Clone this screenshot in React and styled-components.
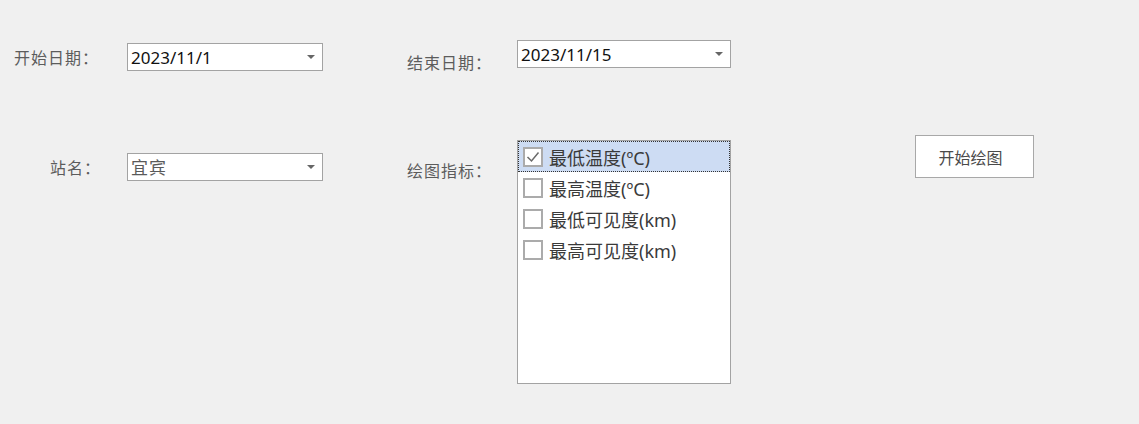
import React, { useState } from 'react';
import styled, { createGlobalStyle } from 'styled-components';

const GlobalStyle = createGlobalStyle`
    html, body {
        margin: 0;
        padding: 0;
        background: #f0f0f0;
    }
    body {
        font-family: "Noto Sans", "Noto Sans CJK SC", sans-serif;
    }
`;

const Page = styled.div`
    width: 1139px;
    height: 424px;
    background: #f0f0f0;
    display: flex;
    flex-direction: column;
`;

const Row = styled.div`
    display: flex;
    align-items: flex-start;
    margin-top: ${(p) => p.$top}px;
`;

const Field = styled.div`
    display: flex;
    align-items: flex-start;
    margin-left: ${(p) => p.$left || 0}px;
`;

const Label = styled.div`
    box-sizing: border-box;
    width: ${(p) => p.$width}px;
    padding-left: ${(p) => p.$indent || 0}px;
    margin-top: ${(p) => p.$top || 0}px;
    font-family: "Noto Sans CJK SC", sans-serif;
    font-size: 16px;
    letter-spacing: 1px;
    line-height: 20px;
    color: #5c5c5c;
    white-space: nowrap;
`;

const Combo = styled.div`
    box-sizing: border-box;
    width: ${(p) => p.$width}px;
    height: 28px;
    margin-top: ${(p) => p.$top || 0}px;
    background: #fff;
    border: 1px solid #a3a3a3;
    display: flex;
    align-items: center;
    justify-content: space-between;
    padding: 0 7px 0 3px;
`;

const ComboText = styled.span`
    font-family: "Noto Sans", "Noto Sans CJK SC", sans-serif;
    font-size: 17px;
    line-height: 1;
    color: ${(p) => (p.$muted ? '#5a5a5a' : '#111')};
    letter-spacing: ${(p) => (p.$muted ? '1px' : '0')};
`;

const Arrow = styled.span`
    width: 0;
    height: 0;
    border-left: 4px solid transparent;
    border-right: 4px solid transparent;
    border-top: 4px solid #666;
`;

const ListBox = styled.div`
    box-sizing: border-box;
    width: 214px;
    height: 244px;
    margin-top: 5px;
    background: #fff;
    border: 1px solid #a3a3a3;
    display: flex;
    flex-direction: column;
`;

const Item = styled.div`
    box-sizing: border-box;
    height: 31px;
    display: flex;
    align-items: center;
    gap: 6px;
    padding-left: 4px;
    background: ${(p) => (p.$selected ? '#cddcf3' : 'transparent')};
    border: 1px dotted ${(p) => (p.$selected ? '#333' : 'transparent')};
    font-family: "Noto Sans", "Noto Sans CJK SC", sans-serif;
    font-size: 18px;
    color: #3a3a3a;
    cursor: default;
`;

const Box = styled.span`
    box-sizing: border-box;
    width: 20px;
    height: 20px;
    border: 2px solid #ababab;
    background: #fff;
    display: flex;
    align-items: center;
    justify-content: center;
    flex-shrink: 0;
`;

const DrawButton = styled.button`
    box-sizing: border-box;
    width: 119px;
    height: 43px;
    margin-left: 184px;
    background: #fff;
    border: 1px solid #a8a8a8;
    font-family: "Noto Sans CJK SC", sans-serif;
    font-size: 16px;
    color: #4a4a4a;
    padding: 0 8px 0 0;
`;

const items = ['最低温度(ºC)', '最高温度(ºC)', '最低可见度(km)', '最高可见度(km)'];

function Check() {
    return (
        <svg width="14" height="12" viewBox="0 0 14 12">
            <polyline points="1.5,6 5.5,10 12.5,1.5" fill="none" stroke="#6a6a6a" strokeWidth="1.5" />
        </svg>
    );
}

export default function App() {
    const [checked, setChecked] = useState([true, false, false, false]);
    const [selected, setSelected] = useState(0);

    const toggle = (i) => {
        setSelected(i);
        setChecked((prev) => prev.map((c, j) => (j === i ? !c : c)));
    };

    return (
        <Page>
            <GlobalStyle />
            <Row $top={40}>
                <Field>
                    <Label $width={127} $indent={14} $top={7}>开始日期：</Label>
                    <Combo $width={196} $top={3}>
                        <ComboText>2023/11/1</ComboText>
                        <Arrow />
                    </Combo>
                </Field>
                <Field $left={84}>
                    <Label $width={110} $top={12}>结束日期：</Label>
                    <Combo $width={214}>
                        <ComboText>2023/11/15</ComboText>
                        <Arrow />
                    </Combo>
                </Field>
            </Row>
            <Row $top={63}>
                <Field>
                    <Label $width={127} $indent={50} $top={22}>站名：</Label>
                    <Combo $width={196} $top={18}>
                        <ComboText $muted>宜宾</ComboText>
                        <Arrow />
                    </Combo>
                </Field>
                <Field $left={84}>
                    <Label $width={110} $top={25}>绘图指标：</Label>
                    <ListBox>
                        {items.map((text, i) => (
                            <Item key={text} $selected={selected === i} onClick={() => toggle(i)}>
                                <Box>{checked[i] && <Check />}</Box>
                                {text}
                            </Item>
                        ))}
                    </ListBox>
                </Field>
                <DrawButton>开始绘图</DrawButton>
            </Row>
        </Page>
    );
}
